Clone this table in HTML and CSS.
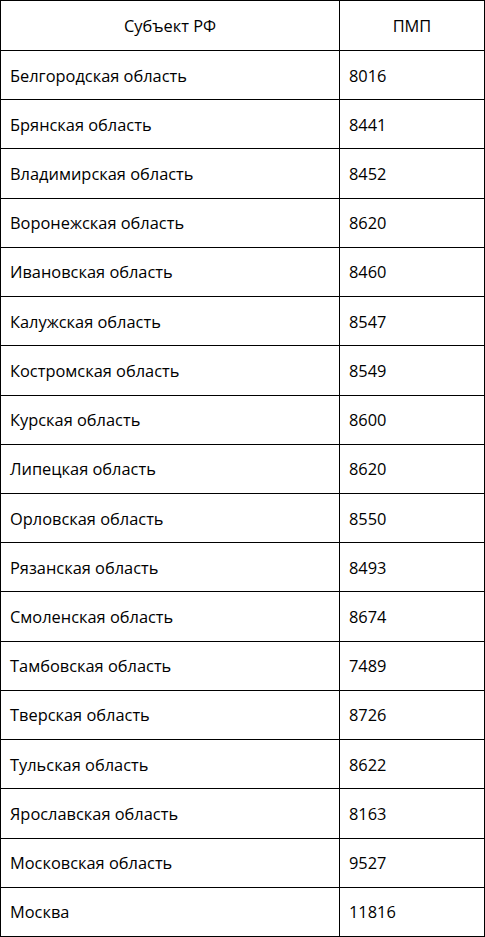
FILE: index.html
```html
<!DOCTYPE html>
<html lang="ru">
<head>
<meta charset="utf-8">
<title>ПМП по субъектам РФ</title>
<link rel="stylesheet" href="styles.css">
</head>
<body>
<div class="table">
  <div class="cell head">Субъект РФ</div><div class="cell head">ПМП</div>
  <div class="cell">Белгородская область</div><div class="cell">8016</div>
  <div class="cell">Брянская область</div><div class="cell">8441</div>
  <div class="cell">Владимирская область</div><div class="cell">8452</div>
  <div class="cell">Воронежская область</div><div class="cell">8620</div>
  <div class="cell">Ивановская область</div><div class="cell">8460</div>
  <div class="cell">Калужская область</div><div class="cell">8547</div>
  <div class="cell">Костромская область</div><div class="cell">8549</div>
  <div class="cell">Курская область</div><div class="cell">8600</div>
  <div class="cell">Липецкая область</div><div class="cell">8620</div>
  <div class="cell">Орловская область</div><div class="cell">8550</div>
  <div class="cell">Рязанская область</div><div class="cell">8493</div>
  <div class="cell">Смоленская область</div><div class="cell">8674</div>
  <div class="cell">Тамбовская область</div><div class="cell">7489</div>
  <div class="cell">Тверская область</div><div class="cell">8726</div>
  <div class="cell">Тульская область</div><div class="cell">8622</div>
  <div class="cell">Ярославская область</div><div class="cell">8163</div>
  <div class="cell">Московская область</div><div class="cell">9527</div>
  <div class="cell">Москва</div><div class="cell">11816</div>
</div>
</body>
</html>
```
FILE: styles.css
```css
html, body {
  margin: 0;
  padding: 0;
  background: #fff;
}
.table {
  box-sizing: border-box;
  width: 485px;
  height: 937px;
  padding: 1px;
  background: #000;
  display: grid;
  grid-template-columns: 338px 144px;
  grid-template-rows: 49px repeat(18, 1fr);
  gap: 1px;
  font-family: "Open Sans", "Noto Sans", sans-serif;
  font-size: 16.4px;
  color: #000;
}
.cell {
  background: #fff;
  display: flex;
  align-items: center;
  padding: 0 9px;
  white-space: nowrap;
}
.head {
  justify-content: center;
}
```
